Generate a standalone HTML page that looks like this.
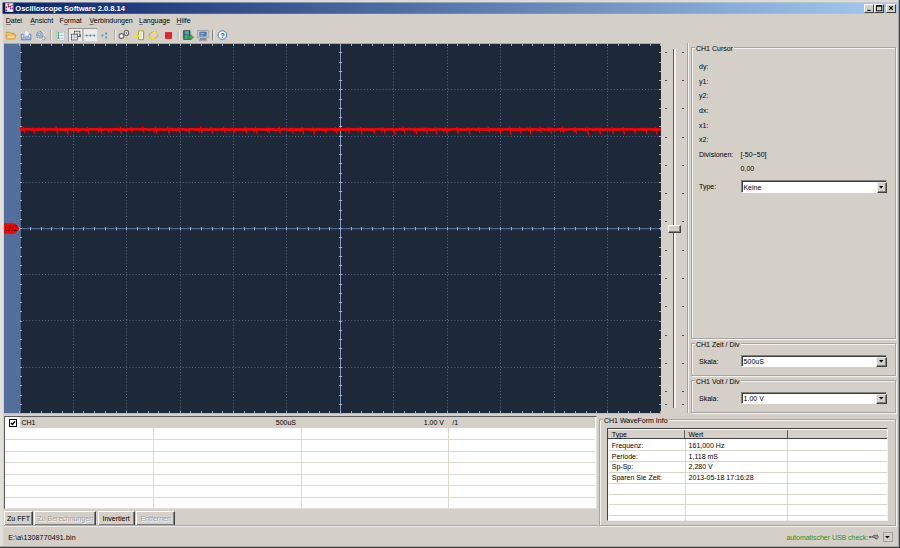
<!DOCTYPE html>
<html><head><meta charset="utf-8">
<style>
*{margin:0;padding:0;box-sizing:border-box}
html,body{width:900px;height:548px;overflow:hidden;background:#D4D0C8;font-family:"Liberation Sans",sans-serif;font-size:7px;color:#000;position:relative}
.a{position:absolute}
.t{position:absolute;white-space:nowrap;line-height:1}
svg{overflow:visible}
</style></head><body>
<div class="a" style="left:0px;top:0px;width:900px;height:548px;background:#D4D0C8"></div>
<div class="a" style="left:0px;top:0px;width:3px;height:548px;background:#E2E0DA"></div>
<div class="a" style="left:0px;top:0px;width:900px;height:2px;background:#DEDBD5"></div>
<div class="a" style="left:899px;top:0px;width:1px;height:548px;background:#404040"></div>
<div class="a" style="left:898px;top:0px;width:1px;height:547px;background:#A8A6A2"></div>
<div class="a" style="left:0px;top:547px;width:900px;height:1px;background:#404040"></div>
<div class="a" style="left:0px;top:546px;width:899px;height:1px;background:#A8A6A2"></div>
<svg class="a" style="left:0;top:0" width="900" height="20"><defs><linearGradient id="tg"><stop offset="0" stop-color="#0A246A"/><stop offset="1" stop-color="#A6CAF0"/></linearGradient></defs><rect x="2.5" y="2.5" width="894.6" height="11.3" fill="url(#tg)"/></svg>
<div class="t" style="left:15.30px;top:4.65px;font-size:7.5px;font-weight:bold;color:#fff">Oscilloscope Software 2.0.8.14</div>
<div class="a" style="left:864px;top:4px;width:9.5px;height:8.5px;background:#D4D0C8;border-top:1px solid #fff;border-left:1px solid #fff;border-right:1px solid #404040;border-bottom:1px solid #404040"></div>
<div class="a" style="left:873.8px;top:4px;width:10.4px;height:8.5px;background:#D4D0C8;border-top:1px solid #fff;border-left:1px solid #fff;border-right:1px solid #404040;border-bottom:1px solid #404040"></div>
<div class="a" style="left:886px;top:4px;width:9.8px;height:8.5px;background:#D4D0C8;border-top:1px solid #fff;border-left:1px solid #fff;border-right:1px solid #404040;border-bottom:1px solid #404040"></div>
<svg class="a" style="left:0;top:0" width="900" height="20"><path d="M867.3,10.4H870.6" stroke="#000" stroke-width="1.1"/><rect x="876.5" y="5.6" width="5.3" height="5.2" fill="none" stroke="#000" stroke-width="0.9"/><path d="M876.5,6.3H881.8" stroke="#000" stroke-width="0.9"/><path d="M889.2,6.2L892.8,9.8M892.8,6.2L889.2,9.8" stroke="#000" stroke-width="1.1"/></svg>
<div class="t" style="left:5.80px;top:16.87px;font-size:7px;"><u style="text-decoration-color:#7A7A7A">D</u>atei</div>
<div class="t" style="left:30.20px;top:16.87px;font-size:7px;"><u style="text-decoration-color:#7A7A7A">A</u>nsicht</div>
<div class="t" style="left:59.60px;top:16.87px;font-size:7px;">F<u style="text-decoration-color:#7A7A7A">o</u>rmat</div>
<div class="t" style="left:89.50px;top:16.87px;font-size:7px;"><u style="text-decoration-color:#7A7A7A">V</u>erbindungen</div>
<div class="t" style="left:139.00px;top:16.87px;font-size:7px;"><u style="text-decoration-color:#7A7A7A">L</u>anguage</div>
<div class="t" style="left:176.60px;top:16.87px;font-size:7px;"><u style="text-decoration-color:#7A7A7A">H</u>ilfe</div>
<svg width="900" height="548" style="position:absolute;left:0;top:0" shape-rendering="auto">
<rect x="4" y="43.5" width="16" height="370" fill="#556F9C"/>
<rect x="20" y="44" width="641" height="369" fill="#1D2839"/>
<rect x="4" y="43" width="657" height="1" fill="#9AAAC4"/>
<rect x="4" y="413" width="657" height="1" fill="#B4C0D4"/>
<rect x="20" y="44" width="1" height="369" fill="#6E88B0" opacity="0.6"/>
<path d="M73.5,44V413M126.5,44V413M180.5,44V413M233.5,44V413M286.5,44V413M393.5,44V413M447.5,44V413M500.5,44V413M554.5,44V413M607.5,44V413M20,89.5H661M20,136.5H661M20,182.5H661M20,274.5H661M20,320.5H661M20,367.5H661" stroke="#7C90B0" stroke-width="1" stroke-dasharray="1 2.125" fill="none" opacity="0.66"/>
<path d="M340.5,44V413" stroke="#7E98BE" stroke-width="1"/>
<path d="M20,228.7H661" stroke="#506890" stroke-width="1.3"/>
<path d="M19.5,44v2M19.5,413v-2M19.5,227.1v3.2M30.5,44v2M30.5,413v-2M30.5,227.1v3.2M41.5,44v2M41.5,413v-2M41.5,227.1v3.2M51.5,44v2M51.5,413v-2M51.5,227.1v3.2M62.5,44v2M62.5,413v-2M62.5,227.1v3.2M73.5,44v2M73.5,413v-2M73.5,227.1v3.2M83.5,44v2M83.5,413v-2M83.5,227.1v3.2M94.5,44v2M94.5,413v-2M94.5,227.1v3.2M105.5,44v2M105.5,413v-2M105.5,227.1v3.2M116.5,44v2M116.5,413v-2M116.5,227.1v3.2M126.5,44v2M126.5,413v-2M126.5,227.1v3.2M137.5,44v2M137.5,413v-2M137.5,227.1v3.2M148.5,44v2M148.5,413v-2M148.5,227.1v3.2M158.5,44v2M158.5,413v-2M158.5,227.1v3.2M169.5,44v2M169.5,413v-2M169.5,227.1v3.2M180.5,44v2M180.5,413v-2M180.5,227.1v3.2M190.5,44v2M190.5,413v-2M190.5,227.1v3.2M201.5,44v2M201.5,413v-2M201.5,227.1v3.2M212.5,44v2M212.5,413v-2M212.5,227.1v3.2M222.5,44v2M222.5,413v-2M222.5,227.1v3.2M233.5,44v2M233.5,413v-2M233.5,227.1v3.2M244.5,44v2M244.5,413v-2M244.5,227.1v3.2M254.5,44v2M254.5,413v-2M254.5,227.1v3.2M265.5,44v2M265.5,413v-2M265.5,227.1v3.2M276.5,44v2M276.5,413v-2M276.5,227.1v3.2M286.5,44v2M286.5,413v-2M286.5,227.1v3.2M297.5,44v2M297.5,413v-2M297.5,227.1v3.2M308.5,44v2M308.5,413v-2M308.5,227.1v3.2M319.5,44v2M319.5,413v-2M319.5,227.1v3.2M329.5,44v2M329.5,413v-2M329.5,227.1v3.2M340.5,44v2M340.5,413v-2M340.5,227.1v3.2M351.5,44v2M351.5,413v-2M351.5,227.1v3.2M361.5,44v2M361.5,413v-2M361.5,227.1v3.2M372.5,44v2M372.5,413v-2M372.5,227.1v3.2M383.5,44v2M383.5,413v-2M383.5,227.1v3.2M393.5,44v2M393.5,413v-2M393.5,227.1v3.2M404.5,44v2M404.5,413v-2M404.5,227.1v3.2M415.5,44v2M415.5,413v-2M415.5,227.1v3.2M425.5,44v2M425.5,413v-2M425.5,227.1v3.2M436.5,44v2M436.5,413v-2M436.5,227.1v3.2M447.5,44v2M447.5,413v-2M447.5,227.1v3.2M457.5,44v2M457.5,413v-2M457.5,227.1v3.2M468.5,44v2M468.5,413v-2M468.5,227.1v3.2M479.5,44v2M479.5,413v-2M479.5,227.1v3.2M489.5,44v2M489.5,413v-2M489.5,227.1v3.2M500.5,44v2M500.5,413v-2M500.5,227.1v3.2M511.5,44v2M511.5,413v-2M511.5,227.1v3.2M522.5,44v2M522.5,413v-2M522.5,227.1v3.2M532.5,44v2M532.5,413v-2M532.5,227.1v3.2M543.5,44v2M543.5,413v-2M543.5,227.1v3.2M554.5,44v2M554.5,413v-2M554.5,227.1v3.2M564.5,44v2M564.5,413v-2M564.5,227.1v3.2M575.5,44v2M575.5,413v-2M575.5,227.1v3.2M586.5,44v2M586.5,413v-2M586.5,227.1v3.2M596.5,44v2M596.5,413v-2M596.5,227.1v3.2M607.5,44v2M607.5,413v-2M607.5,227.1v3.2M618.5,44v2M618.5,413v-2M618.5,227.1v3.2M628.5,44v2M628.5,413v-2M628.5,227.1v3.2M639.5,44v2M639.5,413v-2M639.5,227.1v3.2M650.5,44v2M650.5,413v-2M650.5,227.1v3.2M660.5,44v2M660.5,413v-2M660.5,227.1v3.2M20,43.5h2M661,43.5h-2M338.9,43.5h3.2M20,52.5h2M661,52.5h-2M338.9,52.5h3.2M20,62.5h2M661,62.5h-2M338.9,62.5h3.2M20,71.5h2M661,71.5h-2M338.9,71.5h3.2M20,80.5h2M661,80.5h-2M338.9,80.5h3.2M20,89.5h2M661,89.5h-2M338.9,89.5h3.2M20,99.5h2M661,99.5h-2M338.9,99.5h3.2M20,108.5h2M661,108.5h-2M338.9,108.5h3.2M20,117.5h2M661,117.5h-2M338.9,117.5h3.2M20,126.5h2M661,126.5h-2M338.9,126.5h3.2M20,136.5h2M661,136.5h-2M338.9,136.5h3.2M20,145.5h2M661,145.5h-2M338.9,145.5h3.2M20,154.5h2M661,154.5h-2M338.9,154.5h3.2M20,163.5h2M661,163.5h-2M338.9,163.5h3.2M20,173.5h2M661,173.5h-2M338.9,173.5h3.2M20,182.5h2M661,182.5h-2M338.9,182.5h3.2M20,191.5h2M661,191.5h-2M338.9,191.5h3.2M20,200.5h2M661,200.5h-2M338.9,200.5h3.2M20,210.5h2M661,210.5h-2M338.9,210.5h3.2M20,219.5h2M661,219.5h-2M338.9,219.5h3.2M20,228.5h2M661,228.5h-2M338.9,228.5h3.2M20,237.5h2M661,237.5h-2M338.9,237.5h3.2M20,247.5h2M661,247.5h-2M338.9,247.5h3.2M20,256.5h2M661,256.5h-2M338.9,256.5h3.2M20,265.5h2M661,265.5h-2M338.9,265.5h3.2M20,274.5h2M661,274.5h-2M338.9,274.5h3.2M20,284.5h2M661,284.5h-2M338.9,284.5h3.2M20,293.5h2M661,293.5h-2M338.9,293.5h3.2M20,302.5h2M661,302.5h-2M338.9,302.5h3.2M20,311.5h2M661,311.5h-2M338.9,311.5h3.2M20,321.5h2M661,321.5h-2M338.9,321.5h3.2M20,330.5h2M661,330.5h-2M338.9,330.5h3.2M20,339.5h2M661,339.5h-2M338.9,339.5h3.2M20,348.5h2M661,348.5h-2M338.9,348.5h3.2M20,358.5h2M661,358.5h-2M338.9,358.5h3.2M20,367.5h2M661,367.5h-2M338.9,367.5h3.2M20,376.5h2M661,376.5h-2M338.9,376.5h3.2M20,385.5h2M661,385.5h-2M338.9,385.5h3.2M20,395.5h2M661,395.5h-2M338.9,395.5h3.2M20,404.5h2M661,404.5h-2M338.9,404.5h3.2M20,413.5h2M661,413.5h-2M338.9,413.5h3.2" stroke="#98B0D0" stroke-width="1" fill="none"/>
<path d="M20.0,129.3L20.9,129.2L21.8,129.5L22.7,129.1L23.6,129.4L24.5,129.3L25.4,129.1L26.3,129.4L27.2,129.1L28.1,129.4L29.0,129.1L29.9,129.2L30.8,129.4L31.7,129.6L32.6,129.2L33.5,129.2L34.4,129.5L35.3,129.7L36.2,129.4L37.1,129.3L38.0,129.7L38.9,129.1L39.8,129.6L40.7,129.3L41.6,129.2L42.5,129.2L43.4,129.3L44.3,129.6L45.2,129.2L46.1,129.4L47.0,129.5L47.9,129.3L48.8,129.4L49.7,129.1L50.6,129.1L51.5,129.2L52.4,129.5L53.3,129.4L54.2,129.3L55.1,129.5L56.0,129.4L56.9,129.3L57.8,129.6L58.7,129.5L59.6,129.2L60.5,129.4L61.4,129.4L62.3,129.6L63.2,129.5L64.1,129.3L65.0,129.7L65.9,129.2L66.8,129.4L67.7,129.6L68.6,129.2L69.5,129.4L70.4,129.1L71.3,129.5L72.2,129.6L73.1,129.4L74.0,129.6L74.9,129.3L75.8,129.5L76.7,129.5L77.6,129.4L78.5,129.4L79.4,129.6L80.3,129.7L81.2,129.4L82.1,129.5L83.0,129.1L83.9,129.5L84.8,129.5L85.7,129.7L86.6,129.6L87.5,129.3L88.4,129.3L89.3,129.5L90.2,129.1L91.1,129.4L92.0,129.2L92.9,129.2L93.8,129.1L94.7,129.6L95.6,129.2L96.5,129.2L97.4,129.3L98.3,129.6L99.2,129.1L100.1,129.4L101.0,129.4L101.9,129.6L102.8,129.6L103.7,129.6L104.6,129.3L105.5,129.3L106.4,129.3L107.3,129.6L108.2,129.7L109.1,129.2L110.0,129.2L110.9,129.2L111.8,129.2L112.7,129.4L113.6,129.5L114.5,129.3L115.4,129.1L116.3,129.4L117.2,129.3L118.1,129.4L119.0,129.7L119.9,129.5L120.8,129.4L121.7,129.5L122.6,129.5L123.5,129.1L124.4,129.6L125.3,129.6L126.2,129.6L127.1,129.6L128.0,129.3L128.9,129.3L129.8,129.2L130.7,129.5L131.6,129.1L132.5,129.1L133.4,129.2L134.3,129.2L135.2,129.3L136.1,129.1L137.0,129.1L137.9,129.2L138.8,129.2L139.7,129.3L140.6,129.1L141.5,129.6L142.4,129.5L143.3,129.2L144.2,129.3L145.1,129.3L146.0,129.3L146.9,129.2L147.8,129.6L148.7,129.7L149.6,129.4L150.5,129.4L151.4,129.2L152.3,129.2L153.2,129.3L154.1,129.3L155.0,129.6L155.9,129.2L156.8,129.1L157.7,129.7L158.6,129.4L159.5,129.2L160.4,129.4L161.3,129.1L162.2,129.4L163.1,129.7L164.0,129.6L164.9,129.5L165.8,129.3L166.7,129.3L167.6,129.2L168.5,129.6L169.4,129.4L170.3,129.6L171.2,129.3L172.1,129.2L173.0,129.6L173.9,129.7L174.8,129.6L175.7,129.6L176.6,129.6L177.5,129.5L178.4,129.2L179.3,129.4L180.2,129.3L181.1,129.1L182.0,129.1L182.9,129.3L183.8,129.3L184.7,129.5L185.6,129.7L186.5,129.4L187.4,129.7L188.3,129.7L189.2,129.7L190.1,129.3L191.0,129.2L191.9,129.2L192.8,129.2L193.7,129.2L194.6,129.5L195.5,129.6L196.4,129.6L197.3,129.4L198.2,129.5L199.1,129.6L200.0,129.2L200.9,129.5L201.8,129.6L202.7,129.6L203.6,129.6L204.5,129.4L205.4,129.2L206.3,129.6L207.2,129.3L208.1,129.6L209.0,129.7L209.9,129.3L210.8,129.3L211.7,129.7L212.6,129.5L213.5,129.2L214.4,129.2L215.3,129.2L216.2,129.6L217.1,129.6L218.0,129.2L218.9,129.6L219.8,129.7L220.7,129.5L221.6,129.3L222.5,129.4L223.4,129.2L224.3,129.1L225.2,129.7L226.1,129.5L227.0,129.4L227.9,129.7L228.8,129.4L229.7,129.6L230.6,129.6L231.5,129.2L232.4,129.3L233.3,129.3L234.2,129.2L235.1,129.5L236.0,129.3L236.9,129.4L237.8,129.2L238.7,129.6L239.6,129.3L240.5,129.4L241.4,129.5L242.3,129.6L243.2,129.4L244.1,129.7L245.0,129.4L245.9,129.4L246.8,129.4L247.7,129.1L248.6,129.4L249.5,129.2L250.4,129.1L251.3,129.6L252.2,129.2L253.1,129.4L254.0,129.5L254.9,129.4L255.8,129.3L256.7,129.4L257.6,129.4L258.5,129.6L259.4,129.2L260.3,129.4L261.2,129.2L262.1,129.3L263.0,129.6L263.9,129.4L264.8,129.4L265.7,129.6L266.6,129.6L267.5,129.4L268.4,129.5L269.3,129.4L270.2,129.4L271.1,129.5L272.0,129.4L272.9,129.4L273.8,129.4L274.7,129.7L275.6,129.5L276.5,129.6L277.4,129.7L278.3,129.3L279.2,129.4L280.1,129.7L281.0,129.6L281.9,129.2L282.8,129.2L283.7,129.4L284.6,129.1L285.5,129.2L286.4,129.1L287.3,129.5L288.2,129.6L289.1,129.6L290.0,129.2L290.9,129.5L291.8,129.5L292.7,129.2L293.6,129.6L294.5,129.7L295.4,129.2L296.3,129.7L297.2,129.3L298.1,129.4L299.0,129.7L299.9,129.6L300.8,129.2L301.7,129.4L302.6,129.4L303.5,129.3L304.4,129.2L305.3,129.3L306.2,129.5L307.1,129.1L308.0,129.4L308.9,129.4L309.8,129.1L310.7,129.3L311.6,129.5L312.5,129.4L313.4,129.1L314.3,129.7L315.2,129.6L316.1,129.7L317.0,129.2L317.9,129.3L318.8,129.1L319.7,129.6L320.6,129.3L321.5,129.2L322.4,129.4L323.3,129.6L324.2,129.6L325.1,129.3L326.0,129.2L326.9,129.7L327.8,129.4L328.7,129.5L329.6,129.2L330.5,129.1L331.4,129.5L332.3,129.4L333.2,129.1L334.1,129.7L335.0,129.5L335.9,129.6L336.8,129.2L337.7,129.6L338.6,129.1L339.5,129.6L340.4,129.4L341.3,129.3L342.2,129.4L343.1,129.7L344.0,129.3L344.9,129.2L345.8,129.4L346.7,129.2L347.6,129.2L348.5,129.2L349.4,129.1L350.3,129.2L351.2,129.3L352.1,129.3L353.0,129.6L353.9,129.3L354.8,129.4L355.7,129.2L356.6,129.3L357.5,129.1L358.4,129.3L359.3,129.1L360.2,129.5L361.1,129.4L362.0,129.2L362.9,129.4L363.8,129.7L364.7,129.2L365.6,129.6L366.5,129.4L367.4,129.4L368.3,129.6L369.2,129.3L370.1,129.4L371.0,129.5L371.9,129.7L372.8,129.3L373.7,129.6L374.6,129.5L375.5,129.5L376.4,129.3L377.3,129.3L378.2,129.1L379.1,129.2L380.0,129.1L380.9,129.5L381.8,129.3L382.7,129.2L383.6,129.2L384.5,129.6L385.4,129.6L386.3,129.5L387.2,129.3L388.1,129.2L389.0,129.3L389.9,129.4L390.8,129.2L391.7,129.4L392.6,129.3L393.5,129.7L394.4,129.7L395.3,129.4L396.2,129.2L397.1,129.7L398.0,129.3L398.9,129.3L399.8,129.1L400.7,129.3L401.6,129.4L402.5,129.4L403.4,129.2L404.3,129.4L405.2,129.1L406.1,129.3L407.0,129.2L407.9,129.3L408.8,129.1L409.7,129.1L410.6,129.3L411.5,129.2L412.4,129.5L413.3,129.4L414.2,129.6L415.1,129.5L416.0,129.5L416.9,129.6L417.8,129.3L418.7,129.3L419.6,129.7L420.5,129.2L421.4,129.5L422.3,129.5L423.2,129.1L424.1,129.6L425.0,129.6L425.9,129.5L426.8,129.5L427.7,129.6L428.6,129.2L429.5,129.4L430.4,129.4L431.3,129.6L432.2,129.6L433.1,129.6L434.0,129.5L434.9,129.6L435.8,129.5L436.7,129.5L437.6,129.2L438.5,129.1L439.4,129.2L440.3,129.3L441.2,129.2L442.1,129.6L443.0,129.4L443.9,129.5L444.8,129.5L445.7,129.5L446.6,129.4L447.5,129.1L448.4,129.6L449.3,129.5L450.2,129.4L451.1,129.4L452.0,129.5L452.9,129.1L453.8,129.5L454.7,129.3L455.6,129.1L456.5,129.3L457.4,129.5L458.3,129.2L459.2,129.5L460.1,129.7L461.0,129.4L461.9,129.3L462.8,129.4L463.7,129.5L464.6,129.6L465.5,129.5L466.4,129.5L467.3,129.1L468.2,129.2L469.1,129.3L470.0,129.5L470.9,129.3L471.8,129.4L472.7,129.1L473.6,129.1L474.5,129.3L475.4,129.5L476.3,129.5L477.2,129.5L478.1,129.3L479.0,129.4L479.9,129.4L480.8,129.4L481.7,129.2L482.6,129.6L483.5,129.2L484.4,129.7L485.3,129.7L486.2,129.1L487.1,129.4L488.0,129.6L488.9,129.7L489.8,129.4L490.7,129.3L491.6,129.2L492.5,129.7L493.4,129.2L494.3,129.4L495.2,129.2L496.1,129.4L497.0,129.7L497.9,129.2L498.8,129.6L499.7,129.4L500.6,129.6L501.5,129.5L502.4,129.2L503.3,129.6L504.2,129.4L505.1,129.1L506.0,129.1L506.9,129.4L507.8,129.4L508.7,129.3L509.6,129.2L510.5,129.3L511.4,129.3L512.3,129.6L513.2,129.1L514.1,129.6L515.0,129.6L515.9,129.2L516.8,129.7L517.7,129.5L518.6,129.6L519.5,129.3L520.4,129.3L521.3,129.3L522.2,129.7L523.1,129.5L524.0,129.3L524.9,129.4L525.8,129.3L526.7,129.1L527.6,129.2L528.5,129.6L529.4,129.3L530.3,129.7L531.2,129.2L532.1,129.3L533.0,129.4L533.9,129.2L534.8,129.3L535.7,129.7L536.6,129.6L537.5,129.6L538.4,129.5L539.3,129.6L540.2,129.7L541.1,129.4L542.0,129.5L542.9,129.1L543.8,129.5L544.7,129.4L545.6,129.6L546.5,129.5L547.4,129.3L548.3,129.1L549.2,129.7L550.1,129.2L551.0,129.4L551.9,129.3L552.8,129.3L553.7,129.5L554.6,129.7L555.5,129.3L556.4,129.5L557.3,129.3L558.2,129.4L559.1,129.3L560.0,129.2L560.9,129.2L561.8,129.2L562.7,129.6L563.6,129.4L564.5,129.2L565.4,129.6L566.3,129.7L567.2,129.4L568.1,129.2L569.0,129.2L569.9,129.2L570.8,129.3L571.7,129.2L572.6,129.2L573.5,129.3L574.4,129.4L575.3,129.6L576.2,129.5L577.1,129.3L578.0,129.3L578.9,129.4L579.8,129.3L580.7,129.3L581.6,129.1L582.5,129.3L583.4,129.7L584.3,129.2L585.2,129.4L586.1,129.5L587.0,129.6L587.9,129.2L588.8,129.3L589.7,129.2L590.6,129.3L591.5,129.4L592.4,129.7L593.3,129.6L594.2,129.6L595.1,129.1L596.0,129.1L596.9,129.5L597.8,129.6L598.7,129.4L599.6,129.5L600.5,129.1L601.4,129.3L602.3,129.7L603.2,129.6L604.1,129.6L605.0,129.7L605.9,129.2L606.8,129.2L607.7,129.2L608.6,129.4L609.5,129.5L610.4,129.7L611.3,129.5L612.2,129.5L613.1,129.6L614.0,129.4L614.9,129.4L615.8,129.1L616.7,129.6L617.6,129.2L618.5,129.7L619.4,129.5L620.3,129.3L621.2,129.2L622.1,129.3L623.0,129.5L623.9,129.5L624.8,129.2L625.7,129.1L626.6,129.4L627.5,129.4L628.4,129.3L629.3,129.2L630.2,129.5L631.1,129.1L632.0,129.3L632.9,129.4L633.8,129.7L634.7,129.5L635.6,129.6L636.5,129.4L637.4,129.2L638.3,129.2L639.2,129.7L640.1,129.5L641.0,129.3L641.9,129.1L642.8,129.4L643.7,129.5L644.6,129.4L645.5,129.3L646.4,129.5L647.3,129.7L648.2,129.2L649.1,129.1L650.0,129.3L650.9,129.4L651.8,129.5L652.7,129.2L653.6,129.6L654.5,129.5L655.4,129.4L656.3,129.2L657.2,129.7L658.1,129.3L659.0,129.6L659.9,129.2L660.8,129.2" fill="none" stroke="#FF0000" stroke-width="2.6"/>
<path d="M23.0,126.6L24.0,128.9L25.0,133.3L23.4,129.9ZM33.2,127.5L34.0,128.9L34.9,133.6L33.5,129.9ZM43.2,127.2L44.2,128.9L45.1,133.1L43.6,129.9ZM40.2,128.4L41.2,131.0L40.5,129.4ZM55.8,126.4L56.8,128.9L57.8,134.4L56.2,129.9ZM66.5,127.6L67.4,128.9L68.3,134.8L66.8,129.9ZM64.5,128.4L65.5,131.7L64.8,129.4ZM77.1,127.6L77.9,128.9L78.6,132.6L77.4,129.9ZM75.6,127.6L76.6,131.1L75.9,129.4ZM87.4,127.3L88.3,128.9L89.2,134.6L87.7,129.9ZM84.4,128.4L85.4,131.8L84.7,129.4ZM100.1,127.6L101.0,128.9L102.0,133.5L100.5,129.9ZM97.7,127.9L98.7,132.5L98.0,129.4ZM109.7,127.8L110.7,128.9L111.7,132.8L110.1,129.9ZM107.8,128.5L108.8,132.7L108.1,129.4ZM120.2,126.3L120.9,128.9L121.6,134.1L120.5,129.9ZM130.8,127.4L131.7,128.9L132.6,132.6L131.1,129.9ZM142.5,126.3L143.2,128.9L144.0,132.7L142.8,129.9ZM155.3,126.3L156.1,128.9L156.8,133.5L155.6,129.9ZM153.1,128.7L154.1,132.8L153.4,129.4ZM167.6,126.6L168.6,128.9L169.5,134.6L168.0,129.9ZM178.3,127.4L179.2,128.9L180.1,133.5L178.7,129.9ZM175.6,128.6L176.6,132.4L175.9,129.4ZM188.0,127.8L188.8,128.9L189.6,133.9L188.3,129.9ZM200.6,126.2L201.3,128.9L202.0,133.2L200.9,129.9ZM198.4,128.3L199.4,132.3L198.7,129.4ZM210.9,127.2L211.8,128.9L212.7,134.1L211.3,129.9ZM223.4,126.8L224.3,128.9L225.3,132.9L223.8,129.9ZM221.2,127.9L222.2,131.6L221.5,129.4ZM233.6,127.5L234.3,128.9L235.0,133.2L233.9,129.9ZM245.1,127.3L246.1,128.9L247.1,133.6L245.5,129.9ZM255.4,126.5L256.4,128.9L257.4,134.2L255.8,129.9ZM253.1,127.8L254.1,132.5L253.4,129.4ZM268.1,127.8L268.8,128.9L269.5,133.3L268.4,129.9ZM266.6,127.7L267.6,132.1L266.9,129.4ZM278.9,126.4L279.7,128.9L280.4,133.7L279.2,129.9ZM291.7,127.7L292.6,128.9L293.5,134.0L292.1,129.9ZM289.3,128.6L290.3,131.2L289.6,129.4ZM302.1,126.9L302.9,128.9L303.6,134.2L302.4,129.9ZM299.6,128.7L300.6,132.3L299.9,129.4ZM312.7,127.6L313.6,128.9L314.4,134.5L313.1,129.9ZM309.9,128.2L310.9,131.7L310.2,129.4ZM324.5,127.7L325.4,128.9L326.3,133.0L324.8,129.9ZM321.9,127.7L322.9,131.5L322.2,129.4ZM335.1,126.9L335.9,128.9L336.6,133.5L335.4,129.9ZM348.0,127.3L349.0,128.9L349.9,133.1L348.4,129.9ZM345.1,128.3L346.1,132.7L345.4,129.4ZM360.4,127.2L361.2,128.9L362.0,134.7L360.7,129.9ZM357.4,128.1L358.4,132.0L357.7,129.4ZM373.1,127.7L373.9,128.9L374.7,134.1L373.4,129.9ZM383.1,127.4L384.1,128.9L385.1,133.9L383.5,129.9ZM380.8,127.6L381.8,132.5L381.1,129.4ZM393.3,127.7L394.3,128.9L395.3,134.9L393.7,129.9ZM403.0,126.3L404.0,128.9L404.9,133.5L403.4,129.9ZM415.4,127.6L416.1,128.9L416.8,134.5L415.7,129.9ZM413.6,128.7L414.6,132.6L413.9,129.4ZM425.6,127.2L426.4,128.9L427.2,133.8L426.0,129.9ZM423.0,127.7L424.0,132.3L423.3,129.4ZM435.3,126.9L435.9,128.9L436.6,134.4L435.5,129.9ZM445.2,126.9L446.1,128.9L446.9,133.9L445.5,129.9ZM442.8,128.3L443.8,132.1L443.1,129.4ZM457.0,127.1L457.7,128.9L458.3,133.7L457.3,129.9ZM468.2,127.5L469.1,128.9L470.1,134.4L468.6,129.9ZM478.3,127.1L479.0,128.9L479.7,132.9L478.6,129.9ZM475.5,128.2L476.5,131.8L475.8,129.4ZM488.0,126.8L488.9,128.9L489.8,132.8L488.3,129.9ZM499.3,127.8L500.1,128.9L500.8,133.8L499.6,129.9ZM509.3,126.4L510.2,128.9L511.1,135.0L509.6,129.9ZM519.4,126.2L520.4,128.9L521.4,133.8L519.8,129.9ZM529.5,126.6L530.2,128.9L530.9,134.8L529.8,129.9ZM527.6,127.7L528.6,131.2L527.9,129.4ZM540.0,126.5L540.8,128.9L541.6,132.9L540.3,129.9ZM550.2,127.5L551.0,128.9L551.7,133.8L550.5,129.9ZM547.5,127.7L548.5,131.2L547.8,129.4ZM562.1,126.4L563.0,128.9L563.9,133.0L562.4,129.9ZM559.9,128.4L560.9,132.2L560.2,129.4ZM574.6,127.0L575.6,128.9L576.6,134.0L575.0,129.9ZM573.1,128.4L574.1,132.2L573.4,129.4ZM586.9,127.4L587.8,128.9L588.6,135.0L587.3,129.9ZM585.1,128.7L586.1,131.8L585.4,129.4ZM599.0,127.8L599.8,128.9L600.5,134.6L599.3,129.9ZM612.0,126.9L612.7,128.9L613.5,134.2L612.3,129.9ZM609.0,128.1L610.0,131.2L609.3,129.4ZM623.0,127.0L623.7,128.9L624.4,134.7L623.3,129.9ZM621.0,128.9L622.0,130.9L621.3,129.4ZM633.7,127.7L634.5,128.9L635.2,133.5L634.0,129.9ZM645.3,127.6L646.1,128.9L646.9,134.1L645.6,129.9ZM643.7,128.7L644.7,131.4L644.0,129.4ZM655.1,126.8L656.0,128.9L657.0,134.7L655.5,129.9ZM652.5,128.1L653.5,130.9L652.8,129.4Z" fill="#FF0000" stroke="#FF0000" stroke-width="0.7" stroke-linejoin="round"/>
<path d="M4,223.2 H15 L19.7,228.5 L15,233.8 H4 Z" fill="#FF0000"/>
<text x="4.4" y="230.9" font-family="Liberation Sans" font-style="italic" font-size="8.4" textLength="12.6" lengthAdjust="spacingAndGlyphs" fill="#101010">CH1</text>
</svg><svg class="a" style="left:0;top:0" width="240" height="44">
<!-- title icon -->
<rect x="5" y="3.3" width="8.3" height="8.7" fill="#F2F2F2"/>
<path d="M4.8,3.3V12.2M5,12.2H13" stroke="#101010" stroke-width="0.7" stroke-dasharray="0.8 0.6"/>
<path d="M4.8,3.3V12.2" stroke="#101010" stroke-width="0.6"/>
<circle cx="8.4" cy="4.5" r="0.9" fill="#F02020"/><circle cx="12.3" cy="5.4" r="0.9" fill="#5060F0"/>
<circle cx="8.5" cy="6.5" r="0.9" fill="#2030F0"/><circle cx="10.4" cy="6.5" r="0.9" fill="#F02020"/>
<circle cx="6.4" cy="7.5" r="0.9" fill="#F02020"/><circle cx="10.5" cy="8.5" r="0.9" fill="#5060F0"/>
<circle cx="12.4" cy="8.4" r="0.9" fill="#F02020"/><circle cx="6.4" cy="10.4" r="0.9" fill="#2030F0"/>
<!-- folder -->
<path d="M6.3,32.3 H10 L11,33.3 H14.2 V35 H16 L14.3,39 H6.3 Z" fill="#F3C56A" stroke="#D0902E" stroke-width="0.8" stroke-linejoin="round"/>
<path d="M7.5,35.2 H15.8 L14.2,38.8 H6.5 Z" fill="#F8D98A" stroke="#D6973A" stroke-width="0.6"/>
<!-- tray -->
<path d="M24.5,31 H27.8 L29,32.3 V36 H24.5 Z" fill="#EEF3FA" stroke="#A8B8D8" stroke-width="0.5"/>
<path d="M27.6,30.8 L29.2,32.2" stroke="#E8C050" stroke-width="1"/>
<path d="M21.3,34.3 H23.3 V37 H29 V34.3 H31 V40 H21.3 Z" fill="#7C9ADA" stroke="#5A7CC0" stroke-width="0.6" stroke-linejoin="round"/>
<rect x="22.2" y="35" width="1" height="2.4" fill="#F0F4FC"/><rect x="29.2" y="35" width="1" height="2.4" fill="#F0F4FC"/>
<rect x="22" y="37.6" width="8.3" height="0.9" fill="#C8D6F0"/>
<!-- preview/gear -->
<rect x="37.5" y="31" width="7.5" height="9.2" rx="0.8" fill="#E6E6E6" stroke="#C4C4C4" stroke-width="0.6"/>
<circle cx="39.8" cy="34.8" r="3.1" fill="none" stroke="#6A6A6A" stroke-width="1.2" stroke-dasharray="0.9 0.7"/>
<circle cx="39.8" cy="34.8" r="2.3" fill="#88AEE0"/>
<circle cx="39.6" cy="34.3" r="0.8" fill="#D8E6F8"/>
<circle cx="43.6" cy="38.3" r="1.6" fill="#E0E0E0" stroke="#6A6A6A" stroke-width="0.9" stroke-dasharray="0.7 0.5"/>
<!-- sep -->
<rect x="50" y="29.5" width="1" height="11" fill="#A8A8A8"/><rect x="51" y="29.5" width="1" height="11" fill="#F0F0F0"/>
<!-- list -->
<rect x="56.5" y="31.2" width="8.2" height="9" fill="#EEF6FA" stroke="#B4BCC4" stroke-width="0.8"/>
<circle cx="58.4" cy="32.8" r="0.9" fill="#30A040"/><circle cx="58.4" cy="35.4" r="0.9" fill="#30A040"/><circle cx="58.4" cy="38.2" r="0.9" fill="#30A040"/>
<path d="M58.4,32.8V38.2" stroke="#30A040" stroke-width="0.7"/>
<path d="M60,32.8H63.5M60,35.4H63.5M60,38.2H63.5" stroke="#90A8D0" stroke-width="0.8"/>
<!-- pressed buttons -->
<rect x="68" y="28" width="14.4" height="13.2" fill="#ECEBE7"/>
<rect x="68" y="28" width="14.4" height="0.9" fill="#8C8C8C"/><rect x="68" y="28" width="0.9" height="13.2" fill="#8C8C8C"/>
<rect x="82.5" y="28" width="14.6" height="13.2" fill="#ECEBE7"/>
<rect x="82.5" y="28" width="14.6" height="0.9" fill="#8C8C8C"/><rect x="82.5" y="28" width="0.9" height="13.2" fill="#8C8C8C"/>
<!-- grid icon -->
<rect x="74.3" y="31.2" width="5.6" height="5.4" fill="#F6F6FA" stroke="#3A3A3A" stroke-width="0.7"/>
<path d="M77.1,31.2V36.6M74.3,33.9H79.9" stroke="#8A8A8A" stroke-width="0.5"/>
<rect x="71.3" y="34.2" width="6" height="5.8" fill="#F2F2F6" stroke="#3A3A3A" stroke-width="0.7"/>
<path d="M74.3,34.2V40M71.3,37.1H77.3" stroke="#8A8A8A" stroke-width="0.5"/>
<path d="M80.3,34.4V37.4" stroke="#303030" stroke-width="0.7"/>
<!-- dots line -->
<path d="M86.5,35.5H94.4" stroke="#5A9AD8" stroke-width="0.6"/>
<circle cx="86.5" cy="35.5" r="1.05" fill="#3C8CD0"/><circle cx="90.3" cy="35.5" r="1.05" fill="#3C8CD0"/><circle cx="94.3" cy="35.5" r="1.05" fill="#3C8CD0"/>
<!-- tree dots -->
<circle cx="102.4" cy="35.6" r="1.05" fill="#4A94D4"/><circle cx="106.1" cy="33.6" r="1.05" fill="#3C8CD0"/><circle cx="106.1" cy="37.5" r="1.05" fill="#3C8CD0"/>
<!-- sep -->
<rect x="114" y="29.8" width="1" height="10.5" fill="#A8A8A8"/><rect x="115" y="29.8" width="1" height="10.5" fill="#F0F0F0"/>
<!-- chain -->
<circle cx="121.5" cy="36" r="2.4" fill="#E8E8E8" stroke="#6A6A6A" stroke-width="1.1"/>
<circle cx="121.6" cy="36.1" r="1" fill="#F8F8F8"/>
<ellipse cx="126.4" cy="33" rx="2.2" ry="2.7" fill="#E8E8E8" stroke="#6A6A6A" stroke-width="1.1"/>
<path d="M126.4,32V34" stroke="#505050" stroke-width="0.8"/>
<circle cx="126.9" cy="38.3" r="1.2" fill="#E0C878"/>
<!-- arrow door -->
<rect x="138.6" y="30.8" width="5" height="9" rx="1" fill="#F4F4F0" stroke="#A0A020" stroke-width="1.1"/>
<path d="M141,32.3V38.5" stroke="#C0C0A0" stroke-width="0.6"/>
<path d="M133.4,35.8H137.3" stroke="#F0E820" stroke-width="1.8"/>
<path d="M136.5,33.3L139.6,35.8L136.5,38.3Z" fill="#F0E020"/>
<!-- refresh -->
<ellipse cx="153.5" cy="35.2" rx="4.6" ry="3.4" fill="none" stroke="#C8A848" stroke-width="0.9" transform="rotate(-20 153.5 35.2)"/>
<path d="M152.5,32.2 Q154.5,31 157,32.2 L158,34.5" stroke="#E8D030" stroke-width="1.4" fill="none"/>
<path d="M154.5,38.3 Q152.5,39.4 150,38.2 L149,36" stroke="#E8D030" stroke-width="1.4" fill="none"/>
<circle cx="154.3" cy="33" r="1.4" fill="#F4E040"/>
<circle cx="152.5" cy="37.5" r="1.4" fill="#F4E040"/>
<!-- red square -->
<rect x="165" y="32.1" width="7" height="6.8" fill="#E6202E"/>
<!-- sep -->
<rect x="177.8" y="29.8" width="1" height="10.8" fill="#B0B0B0"/><rect x="178.8" y="29.8" width="1" height="10.8" fill="#F0F0F0"/>
<!-- film -->
<rect x="183.2" y="30.2" width="7.2" height="9.6" fill="#404848"/>
<rect x="184.6" y="31" width="4.4" height="3.6" fill="#40A0E0"/><rect x="184.6" y="35.3" width="4.4" height="3.6" fill="#40B0B0"/>
<path d="M185.6,31.5L188,33.5M185.6,36L188,38" stroke="#50D050" stroke-width="1"/>
<path d="M187.2,36.2H190.8V34.4L193.6,37.2L190.8,40V38.2H187.2Z" fill="#40B040" stroke="#208020" stroke-width="0.5"/>
<!-- monitor -->
<rect x="197.8" y="30.3" width="10.3" height="7.6" fill="#D8DCE0" stroke="#808890" stroke-width="0.7"/>
<rect x="199.2" y="31.6" width="7.5" height="5" fill="#4E7CB8"/>
<path d="M200.5,33.5H204M200.5,35H203" stroke="#C0D4F0" stroke-width="0.6"/>
<path d="M200,38.8H206M199,40H207" stroke="#606870" stroke-width="0.9"/>
<!-- sep dark -->
<rect x="212.4" y="29.5" width="1" height="11" fill="#606060"/><rect x="213.4" y="29.5" width="1" height="11" fill="#FFFFFF"/>
<!-- help -->
<circle cx="222.4" cy="35.1" r="4.3" fill="#FAFCFF" stroke="#3A78C0" stroke-width="1"/>
<text x="220.2" y="38.3" font-family="Liberation Sans" font-weight="bold" font-size="7.5" fill="#1E4E90">?</text>
</svg>

<div class="a" style="left:664.5px;top:52px;width:2.5px;height:1px;background:#505050"></div>
<div class="a" style="left:681.8px;top:52px;width:2.5px;height:1px;background:#505050"></div>
<div class="a" style="left:664.5px;top:80px;width:2.5px;height:1px;background:#505050"></div>
<div class="a" style="left:681.8px;top:80px;width:2.5px;height:1px;background:#505050"></div>
<div class="a" style="left:664.5px;top:108px;width:2.5px;height:1px;background:#505050"></div>
<div class="a" style="left:681.8px;top:108px;width:2.5px;height:1px;background:#505050"></div>
<div class="a" style="left:664.5px;top:137px;width:2.5px;height:1px;background:#505050"></div>
<div class="a" style="left:681.8px;top:137px;width:2.5px;height:1px;background:#505050"></div>
<div class="a" style="left:664.5px;top:165px;width:2.5px;height:1px;background:#505050"></div>
<div class="a" style="left:681.8px;top:165px;width:2.5px;height:1px;background:#505050"></div>
<div class="a" style="left:664.5px;top:193px;width:2.5px;height:1px;background:#505050"></div>
<div class="a" style="left:681.8px;top:193px;width:2.5px;height:1px;background:#505050"></div>
<div class="a" style="left:664.5px;top:221px;width:2.5px;height:1px;background:#505050"></div>
<div class="a" style="left:681.8px;top:221px;width:2.5px;height:1px;background:#505050"></div>
<div class="a" style="left:664.5px;top:250px;width:2.5px;height:1px;background:#505050"></div>
<div class="a" style="left:681.8px;top:250px;width:2.5px;height:1px;background:#505050"></div>
<div class="a" style="left:664.5px;top:278px;width:2.5px;height:1px;background:#505050"></div>
<div class="a" style="left:681.8px;top:278px;width:2.5px;height:1px;background:#505050"></div>
<div class="a" style="left:664.5px;top:306px;width:2.5px;height:1px;background:#505050"></div>
<div class="a" style="left:681.8px;top:306px;width:2.5px;height:1px;background:#505050"></div>
<div class="a" style="left:664.5px;top:335px;width:2.5px;height:1px;background:#505050"></div>
<div class="a" style="left:681.8px;top:335px;width:2.5px;height:1px;background:#505050"></div>
<div class="a" style="left:664.5px;top:363px;width:2.5px;height:1px;background:#505050"></div>
<div class="a" style="left:681.8px;top:363px;width:2.5px;height:1px;background:#505050"></div>
<div class="a" style="left:664.5px;top:391px;width:2.5px;height:1px;background:#505050"></div>
<div class="a" style="left:681.8px;top:391px;width:2.5px;height:1px;background:#505050"></div>
<div class="a" style="left:664.5px;top:404px;width:2.5px;height:1px;background:#505050"></div>
<div class="a" style="left:681.8px;top:404px;width:2.5px;height:1px;background:#505050"></div>
<div class="a" style="left:673px;top:48.5px;width:1px;height:359px;background:#5E5E5E"></div>
<div class="a" style="left:674px;top:48.5px;width:1.5px;height:359px;background:#F4F4F0"></div>
<div class="a" style="left:668px;top:225.3px;width:13px;height:7.4px;background:#D4D0C8;border-top:1px solid #fff;border-left:1px solid #fff;border-right:1px solid #404040;border-bottom:1px solid #404040;box-shadow:inset -1px -1px 0 #808080"></div>
<div class="a" style="left:687px;top:43px;width:1px;height:370px;background:#A0A0A0"></div>
<div class="a" style="left:688px;top:43px;width:1px;height:370px;background:#F4F2EE"></div>
<div class="a" style="left:692px;top:48px;width:205px;height:292px;border:1px solid #F4F2EE"></div>
<div class="a" style="left:691px;top:47px;width:205px;height:292px;border:1px solid #A4A4A4"></div>
<div class="t" style="left:696.00px;top:45.27px;font-size:7px;background:#D4D0C8;padding:0 1px;margin-left:-1px;line-height:7px;height:7px">CH1 Cursor</div>
<div class="t" style="left:699.00px;top:62.97px;font-size:7px;">dy:</div>
<div class="t" style="left:699.00px;top:77.87px;font-size:7px;">y1:</div>
<div class="t" style="left:699.00px;top:92.47px;font-size:7px;">y2:</div>
<div class="t" style="left:699.00px;top:107.07px;font-size:7px;">dx:</div>
<div class="t" style="left:699.00px;top:121.57px;font-size:7px;">x1:</div>
<div class="t" style="left:699.00px;top:136.07px;font-size:7px;">x2:</div>
<div class="t" style="left:699.00px;top:150.67px;font-size:7px;">Divisionen:</div>
<div class="t" style="left:699.00px;top:182.77px;font-size:7px;">Type:</div>
<div class="t" style="left:740.60px;top:150.67px;font-size:7px;">[-50~50]</div>
<div class="t" style="left:740.60px;top:165.27px;font-size:7px;">0,00</div>
<div class="a" style="left:740.6px;top:180px;width:146.6px;height:13px;background:#fff;border-top:1px solid #808080;border-left:1px solid #808080;border-right:1px solid #fff;border-bottom:1px solid #fff;box-shadow:inset 1px 1px 0 #404040"></div>
<div class="a" style="left:876.6px;top:181.6px;width:10.4px;height:11px;background:#D4D0C8;border-top:1px solid #E8E6E2;border-left:1px solid #F4F2EE;border-right:1px solid #404040;border-bottom:1px solid #404040;box-shadow:inset -1px -1px 0 #808080"></div>
<svg class="a" style="left:879.2px;top:185.5px" width="5" height="3"><path d="M0,0 L4.4,0 L2.2,2.4 Z" fill="#000"/></svg>
<div class="t" style="left:743.40px;top:183.77px;font-size:7px;">Keine</div>
<div class="a" style="left:692px;top:344px;width:205px;height:33px;border:1px solid #F4F2EE"></div>
<div class="a" style="left:691px;top:343px;width:205px;height:33px;border:1px solid #A4A4A4"></div>
<div class="t" style="left:696.00px;top:341.07px;font-size:7px;background:#D4D0C8;padding:0 1px;margin-left:-1px;line-height:7px;height:7px">CH1 Zeit / Div</div>
<div class="t" style="left:699.00px;top:358.27px;font-size:7px;">Skala:</div>
<div class="a" style="left:740.8px;top:355px;width:146.2px;height:12.3px;background:#fff;border-top:1px solid #808080;border-left:1px solid #808080;border-right:1px solid #fff;border-bottom:1px solid #fff;box-shadow:inset 1px 1px 0 #404040"></div>
<div class="a" style="left:876.4px;top:356.6px;width:10.4px;height:10.3px;background:#D4D0C8;border-top:1px solid #E8E6E2;border-left:1px solid #F4F2EE;border-right:1px solid #404040;border-bottom:1px solid #404040;box-shadow:inset -1px -1px 0 #808080"></div>
<svg class="a" style="left:879.0px;top:360.15px" width="5" height="3"><path d="M0,0 L4.4,0 L2.2,2.4 Z" fill="#000"/></svg>
<div class="t" style="left:743.60px;top:358.42px;font-size:7px;">500uS</div>
<div class="a" style="left:692px;top:381px;width:205px;height:33px;border:1px solid #F4F2EE"></div>
<div class="a" style="left:691px;top:380px;width:205px;height:33px;border:1px solid #A4A4A4"></div>
<div class="t" style="left:696.00px;top:377.97px;font-size:7px;background:#D4D0C8;padding:0 1px;margin-left:-1px;line-height:7px;height:7px">CH1 Volt / Div</div>
<div class="t" style="left:699.00px;top:395.47px;font-size:7px;">Skala:</div>
<div class="a" style="left:740.8px;top:392.2px;width:146.2px;height:12px;background:#fff;border-top:1px solid #808080;border-left:1px solid #808080;border-right:1px solid #fff;border-bottom:1px solid #fff;box-shadow:inset 1px 1px 0 #404040"></div>
<div class="a" style="left:876.4px;top:393.8px;width:10.4px;height:10px;background:#D4D0C8;border-top:1px solid #E8E6E2;border-left:1px solid #F4F2EE;border-right:1px solid #404040;border-bottom:1px solid #404040;box-shadow:inset -1px -1px 0 #808080"></div>
<svg class="a" style="left:879.0px;top:397.2px" width="5" height="3"><path d="M0,0 L4.4,0 L2.2,2.4 Z" fill="#000"/></svg>
<div class="t" style="left:743.60px;top:395.47px;font-size:7px;">1.00 V</div>
<div class="a" style="left:4px;top:416px;width:593px;height:93px;background:#fff;border-top:1px solid #5C5C5C;border-left:1px solid #5C5C5C;border-right:1px solid #E2E0DA;border-bottom:1px solid #E2E0DA"></div>
<div class="a" style="left:20px;top:417px;width:575px;height:10.5px;background:#D4D0C8"></div>
<div class="a" style="left:5px;top:438.8px;width:590px;height:1px;background:#DCD8D0"></div>
<div class="a" style="left:5px;top:450.5px;width:590px;height:1px;background:#DCD8D0"></div>
<div class="a" style="left:5px;top:461.9px;width:590px;height:1px;background:#DCD8D0"></div>
<div class="a" style="left:5px;top:473.5px;width:590px;height:1px;background:#DCD8D0"></div>
<div class="a" style="left:5px;top:484.9px;width:590px;height:1px;background:#DCD8D0"></div>
<div class="a" style="left:5px;top:496.5px;width:590px;height:1px;background:#DCD8D0"></div>
<div class="a" style="left:153px;top:428px;width:1px;height:80px;background:#DCD8D0"></div>
<div class="a" style="left:448px;top:428px;width:1px;height:80px;background:#DCD8D0"></div>
<div class="a" style="left:300.5px;top:428px;width:1px;height:80px;background:#DCD8D0"></div>
<div class="a" style="left:8.8px;top:418.6px;width:8.6px;height:8.6px;background:#fff;border:1.8px solid #000"></div>
<svg class="a" style="left:10px;top:420px" width="6" height="6"><path d="M1,3 L2.5,4.5 L5,1.3" stroke="#000" stroke-width="1.4" fill="none"/></svg>
<div class="t" style="left:21.50px;top:418.87px;font-size:7px;">CH1</div>
<div class="t" style="right:604.00px;top:418.87px;font-size:7px;">500uS</div>
<div class="t" style="right:456.00px;top:418.87px;font-size:7px;">1.00 V</div>
<div class="t" style="left:452.30px;top:418.87px;font-size:7px;">/1</div>
<div class="a" style="left:4px;top:511px;width:29px;height:14.5px;background:#D4D0C8;border-top:1px solid #fff;border-left:1px solid #fff;border-right:1px solid #404040;border-bottom:1px solid #404040;box-shadow:inset -1px -1px 0 #808080"></div>
<div class="t" style="left:-81.50px;width:200px;text-align:center;top:515.27px;font-size:7px;">Zu FFT</div>
<div class="a" style="left:34.4px;top:511px;width:61.6px;height:14.5px;background:#D4D0C8;border-top:1px solid #fff;border-left:1px solid #fff;border-right:1px solid #404040;border-bottom:1px solid #404040;box-shadow:inset -1px -1px 0 #808080"></div>
<div class="t" style="left:-34.80px;width:200px;text-align:center;top:515.27px;font-size:7px;color:#A0A0A0;text-shadow:0.7px 0.7px 0 #fff">Zu Berechnungen</div>
<div class="a" style="left:97.6px;top:511px;width:37.0px;height:14.5px;background:#D4D0C8;border-top:1px solid #fff;border-left:1px solid #fff;border-right:1px solid #404040;border-bottom:1px solid #404040;box-shadow:inset -1px -1px 0 #808080"></div>
<div class="t" style="left:16.10px;width:200px;text-align:center;top:515.27px;font-size:7px;">Invertiert</div>
<div class="a" style="left:136.4px;top:511px;width:38.599999999999994px;height:14.5px;background:#D4D0C8;border-top:1px solid #fff;border-left:1px solid #fff;border-right:1px solid #404040;border-bottom:1px solid #404040;box-shadow:inset -1px -1px 0 #808080"></div>
<div class="t" style="left:55.70px;width:200px;text-align:center;top:515.27px;font-size:7px;color:#A0A0A0;text-shadow:0.7px 0.7px 0 #fff">Entfernen</div>
<div class="a" style="left:4px;top:525px;width:594px;height:1px;background:#A8A8A8"></div>
<div class="a" style="left:4px;top:526px;width:594px;height:1px;background:#F0EEEA"></div>
<div class="a" style="left:600px;top:420px;width:296.5px;height:107px;border:1px solid #F4F2EE"></div>
<div class="a" style="left:599px;top:419px;width:296.5px;height:107px;border:1px solid #A4A4A4"></div>
<div class="t" style="left:604.00px;top:416.97px;font-size:7px;background:#D4D0C8;padding:0 1px;margin-left:-1px;line-height:7px;height:7px">CH1 WaveForm Info</div>
<div class="a" style="left:607px;top:428px;width:281px;height:93px;background:#fff;border-top:1px solid #404040;border-left:1px solid #404040;border-right:1px solid #F4F2EE;border-bottom:1px solid #F4F2EE"></div>
<div class="a" style="left:608px;top:429px;width:279px;height:10px;background:#D4D0C8;border-top:1px solid #fff;border-bottom:1px solid #404040"></div>
<div class="a" style="left:684px;top:430px;width:1px;height:8px;background:#606060"></div>
<div class="a" style="left:786.5px;top:430px;width:1px;height:8px;background:#606060"></div>
<div class="a" style="left:609px;top:450.0px;width:278px;height:1px;background:#D8D4CC"></div>
<div class="a" style="left:609px;top:461.0px;width:278px;height:1px;background:#D8D4CC"></div>
<div class="a" style="left:609px;top:472.0px;width:278px;height:1px;background:#D8D4CC"></div>
<div class="a" style="left:609px;top:482.7px;width:278px;height:1px;background:#D8D4CC"></div>
<div class="a" style="left:609px;top:493.5px;width:278px;height:1px;background:#D8D4CC"></div>
<div class="a" style="left:609px;top:504.3px;width:278px;height:1px;background:#D8D4CC"></div>
<div class="a" style="left:609px;top:514.9px;width:278px;height:1px;background:#D8D4CC"></div>
<div class="a" style="left:684.5px;top:439px;width:1px;height:82px;background:#D8D4CC"></div>
<div class="a" style="left:786.8px;top:439px;width:1px;height:82px;background:#D8D4CC"></div>
<div class="t" style="left:611.80px;top:431.07px;font-size:7px;">Type</div>
<div class="t" style="left:688.60px;top:431.07px;font-size:7px;">Wert</div>
<div class="t" style="left:611.80px;top:442.27px;font-size:7px;">Frequenz:</div>
<div class="t" style="left:688.60px;top:442.27px;font-size:7px;">161,000 Hz</div>
<div class="t" style="left:611.80px;top:452.67px;font-size:7px;">Periode:</div>
<div class="t" style="left:688.60px;top:452.67px;font-size:7px;">1,118 mS</div>
<div class="t" style="left:611.80px;top:463.47px;font-size:7px;">Sp-Sp:</div>
<div class="t" style="left:688.60px;top:463.47px;font-size:7px;">2,280 V</div>
<div class="t" style="left:611.80px;top:474.27px;font-size:7px;">Sparen Sie Zeit:</div>
<div class="t" style="left:688.60px;top:474.27px;font-size:7px;">2013-05-18 17:16:28</div>
<div class="t" style="left:8.30px;top:534.07px;font-size:7px;letter-spacing:0.15px">E:\a\1308770491.bin</div>
<div class="t" style="left:786.40px;top:534.07px;font-size:7px;color:#22962A;letter-spacing:-0.03px">automatischer USB check:</div>
<svg class="a" style="left:0;top:0" width="900" height="548"><path d="M869.5,537H878M872,537L874,535.3H876M873.5,537L875,538.6H876.5" stroke="#505050" stroke-width="0.9" fill="none"/><circle cx="870" cy="537" r="0.9" fill="#505050"/><rect x="876.3" y="534.7" width="1.5" height="1.3" fill="#505050"/><circle cx="877" cy="538.7" r="0.8" fill="#505050"/><path d="M878,536.2V537.8L879.4,537Z" fill="#505050"/></svg>
<div class="a" style="left:882.8px;top:532.2px;width:10px;height:9.6px;border:1px solid #A0A0A0;background:#D4D0C8"></div>
<svg class="a" style="left:885.4px;top:536px" width="5" height="3"><path d="M0,0 L4.8,0 L2.4,2.6 Z" fill="#000"/></svg>
</body></html>
